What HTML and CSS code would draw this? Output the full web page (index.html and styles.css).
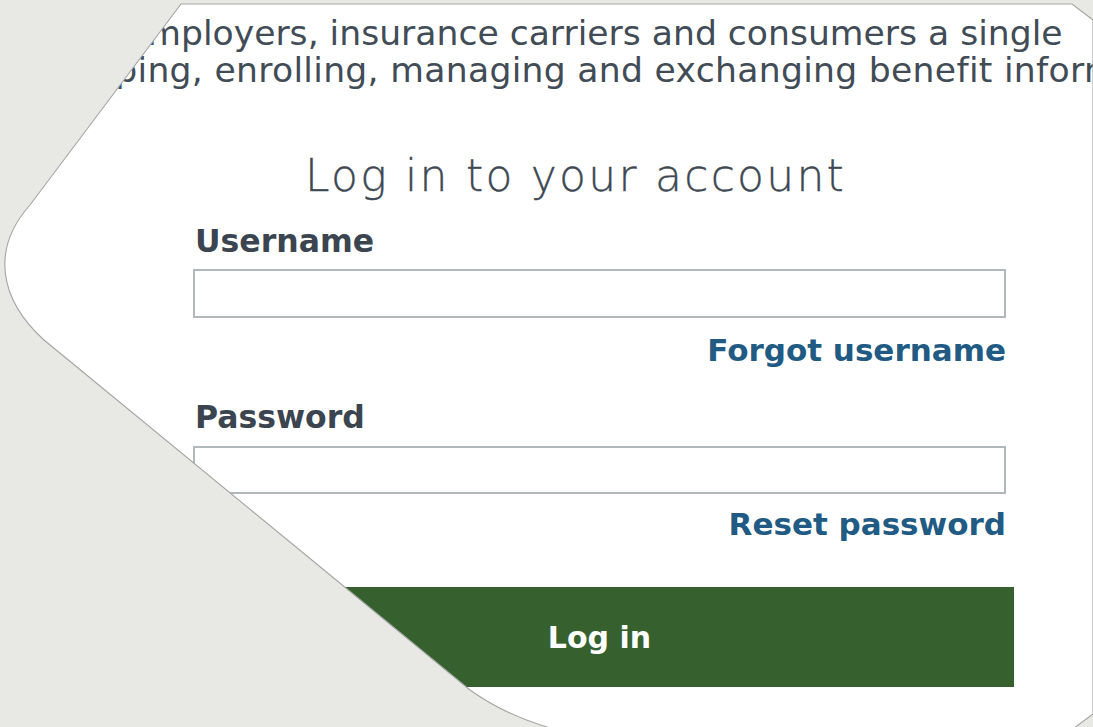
FILE: index.html
```html
<!DOCTYPE html>
<html lang="en">
<head>
<meta charset="utf-8">
<title>Log in to your account</title>
<link rel="stylesheet" href="styles.css">
</head>
<body>
<div class="stage">
  <div class="panel">
    <p class="intro">
      <span class="line l1">employers, insurance carriers and consumers a single</span>
      <span class="line l2">shopping, enrolling, managing and exchanging benefit information.</span>
    </p>
    <form class="login">
      <h1 class="title">Log in to your account</h1>
      <label class="label label-first" for="username">Username</label>
      <input class="field" id="username" type="text">
      <a class="aux" href="#">Forgot username</a>
      <label class="label label-second" for="password">Password</label>
      <input class="field field-pw" id="password" type="password">
      <a class="aux aux-reset" href="#">Reset password</a>
      <button class="submit" type="button">Log in</button>
    </form>
  </div>
  <svg class="outline" width="1093" height="727" viewBox="0 0 1093 727" aria-hidden="true">
    <path d="M 181 4 L 1072 4 L 1093 20 L 1093 714 L 1066 734 L 575 734 Q 515 722 470 690 L 44 340 C 0 300, -10 250, 30 205 Z" fill="none" stroke="#a3a5a3" stroke-width="1.1"/>
  </svg>
</div>
</body>
</html>
```

FILE: styles.css
```css
html, body {
  margin: 0;
  height: 100%;
  overflow: hidden;
  background: #e8e9e5;
}

.stage {
  position: relative;
  width: 1093px;
  height: 727px;
}

.panel {
  width: 1093px;
  height: 727px;
  background: #ffffff;
  overflow: hidden;
  clip-path: path("M 181 4 L 1072 4 L 1093 20 L 1093 714 L 1066 734 L 575 734 Q 515 722 470 690 L 44 340 C 0 300, -10 250, 30 205 Z");
  font-family: "DejaVu Sans", "Liberation Sans", sans-serif;
  color: #3c4751;
}

.outline {
  position: absolute;
  left: 0;
  top: 0;
  pointer-events: none;
}

.intro {
  margin: 0;
  padding-top: 15px;
  font-size: 34.6px;
  line-height: 37px;
  white-space: nowrap;
  color: #414c56;
}

.line {
  display: block;
}

.l1 {
  padding-left: 126px;
}

.l2 {
  padding-left: 31px;
  letter-spacing: 0.3px;
}

.login {
  width: 813px;
  margin: 61px 0 0 193px;
  display: flex;
  flex-direction: column;
}

.title {
  margin: 0;
  padding-left: 112px;
  font-size: 44px;
  font-weight: 200;
  line-height: 52px;
  letter-spacing: 2.25px;
  color: #3e4953;
  -webkit-text-stroke: 0.35px #3e4953;
}

.label {
  padding-left: 2px;
  font-size: 31.5px;
  font-weight: 700;
  line-height: 36px;
  color: #3a4550;
}

.label-first {
  margin-top: 21px;
}

.label-second {
  margin-top: 31px;
}

.field {
  box-sizing: border-box;
  height: 49px;
  margin: 10px 0 0;
  border: 2px solid #b3b8bb;
  border-radius: 0;
  background: #fff;
  font: inherit;
}

.field-pw {
  height: 48px;
  margin-top: 11px;
}

.aux {
  align-self: flex-end;
  margin-top: 14px;
  font-size: 31px;
  font-weight: 700;
  line-height: 36px;
  color: #215a83;
  text-decoration: none;
}

.aux-reset {
  margin-top: 12px;
}

.submit {
  height: 100px;
  margin: 45px -8px 0;
  border: 0;
  background: #36612f;
  color: #ffffff;
  font-family: inherit;
  font-size: 30px;
  font-weight: 700;
}
```
